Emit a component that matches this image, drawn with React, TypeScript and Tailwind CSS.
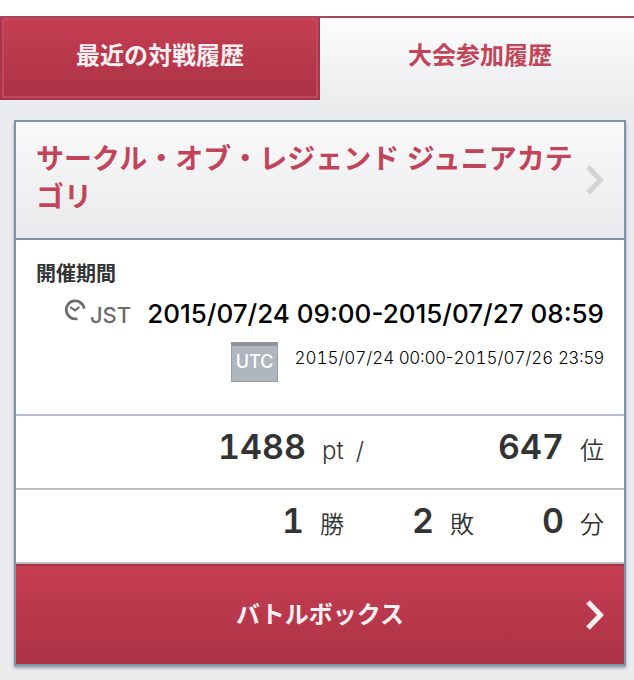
import React from 'react';

interface Moment {
  date: string;
  time: string;
}

interface Period {
  from: Moment;
  to: Moment;
}

interface TournamentEntry {
  title: string;
  jst: Period;
  utc: Period;
  points: number;
  rank: number;
  wins: number;
  losses: number;
  draws: number;
}

interface PeriodTextProps {
  period: Period;
  className?: string;
  dateClassName?: string;
}

interface StatProps {
  value: number;
  unit: React.ReactNode;
  className?: string;
}

interface ChevronProps {
  className?: string;
}

const entry: TournamentEntry = {
  title: 'サークル・オブ・レジェンド ジュニアカテゴリ',
  jst: {
    from: { date: '2015/07/24', time: '09:00' },
    to: { date: '2015/07/27', time: '08:59' },
  },
  utc: {
    from: { date: '2015/07/24', time: '00:00' },
    to: { date: '2015/07/26', time: '23:59' },
  },
  points: 1488,
  rank: 647,
  wins: 1,
  losses: 2,
  draws: 0,
};

const Chevron: React.FC<ChevronProps> = ({ className }) => (
  <svg viewBox="0 0 18 30" className={`h-[30px] w-[18px] shrink-0 ${className ?? ''}`} fill="none" stroke="currentColor" strokeWidth="5" aria-hidden="true">
    <path d="M2 2 L14.5 15 L2 28" />
  </svg>
);

const ClockIcon: React.FC = () => (
  <svg viewBox="0 0 22 22" className="h-[22px] w-[22px]" fill="none" stroke="currentColor" aria-hidden="true">
    <path d="M20.2 9.6 A9 9 0 1 0 13.4 19.6" strokeWidth="2.8" />
    <path d="M6 8 L11 11.4 L15.4 8" strokeWidth="2" />
  </svg>
);

const PeriodText: React.FC<PeriodTextProps> = ({ period, className, dateClassName }) => (
  <p className={`leading-8 whitespace-nowrap text-black normal-nums ${className ?? ''}`}>
    <time>
      <span className={dateClassName}>{period.from.date}</span> {period.from.time}
    </time>
    -
    <time>
      <span className={dateClassName}>{period.to.date}</span> {period.to.time}
    </time>
  </p>
);

const Stat: React.FC<StatProps> = ({ value, unit, className }) => (
  <div className={`flex items-baseline justify-end gap-4 ${className ?? ''}`}>
    <span className="text-[34px] leading-[42px] font-semibold">{value}</span>
    <span className="text-2xl font-[350] whitespace-nowrap">{unit}</span>
  </div>
);

const App: React.FC = () => {
  return (
    <div className="min-h-screen overflow-x-hidden bg-[#eaebed] font-[Inter,'Noto_Sans_CJK_JP',sans-serif] text-[#333] tabular-nums">
      <div className="h-4 bg-white" />
      <main className="-mr-1.5 border-t-2 border-[#ab4558] bg-linear-to-b from-[#fcfcfd] to-[#eaebed] to-[90px]">
        <nav className="grid grid-cols-2 text-2xl font-bold">
          <button className="h-[82px] border-2 border-t-0 border-[#aa3449] bg-linear-to-b from-[#c53e52] to-[#ac3245] pb-1 text-[#fff0f3] inset-ring-2 inset-ring-[#c4485b]">
            最近の対戦履歴
          </button>
          <button className="h-[82px] pb-1.5 text-[#c24458]">大会参加履歴</button>
        </nav>

        <article className="mx-3.5 mt-5 border-2 border-[#8092a8] bg-white shadow-[0_2px_3px_#9999a8]">
          <a href="#detail" className="flex items-center justify-between border-b-2 border-[#8092a8] bg-linear-to-b from-[#fafafb] to-[#e9e9ec] pt-[18px] pr-5 pb-[22px] pl-5">
            <h2 className="text-[28px] leading-[38px] font-bold text-[#c24458]">{entry.title}</h2>
            <Chevron className="mt-1 text-[#d3d3d5]" />
          </a>

          <section className="h-[176px] border-b-2 border-[#b9bdcd] px-5 pt-5">
            <h3 className="text-xl leading-7 font-bold">開催期間</h3>
            <div className="mt-2.5 flex items-center justify-end">
              <div className="mr-4 flex items-start text-[#6b6b6b]">
                <ClockIcon />
                <span className="ml-1 pt-0.5 text-[22px] leading-7 font-medium">JST</span>
              </div>
              <PeriodText period={entry.jst} className="text-[26px] font-medium" />
            </div>
            <div className="mt-3 flex items-start justify-end gap-4">
              <span className="h-10 border border-t-4 border-[#999fa8] border-t-[#8f959e] bg-[#b0b6bf] px-1 text-lg leading-8 font-medium text-white">UTC</span>
              <PeriodText period={entry.utc} className="text-[17px] font-light" dateClassName="tabular-nums" />
            </div>
          </section>

          <section className="flex h-[74px] justify-end border-b-2 border-[#b9bdcd] px-5 pt-2.5">
            <Stat value={entry.points} unit={<>pt<span className="ml-3">/</span></>} />
            <Stat value={entry.rank} unit="位" className="w-[240px]" />
          </section>

          <section className="flex h-[74px] justify-end border-b-2 border-[#c5b9ca] px-5 pt-2.5">
            <Stat value={entry.wins} unit="勝" />
            <Stat value={entry.losses} unit="敗" className="w-[130px]" />
            <Stat value={entry.draws} unit="分" className="w-[130px]" />
          </section>

          <a
            href="#battle-box"
            className="grid h-[100px] grid-cols-[1fr_auto_1fr] items-center border-t-2 border-[#9f3548] bg-linear-to-b from-[#c53e52] to-[#ac3245] px-5 text-2xl font-bold text-[#fff0f3]"
          >
            <span className="col-start-2">バトルボックス</span>
            <Chevron className="justify-self-end" />
          </a>
        </article>
      </main>
    </div>
  );
};

export default App;
